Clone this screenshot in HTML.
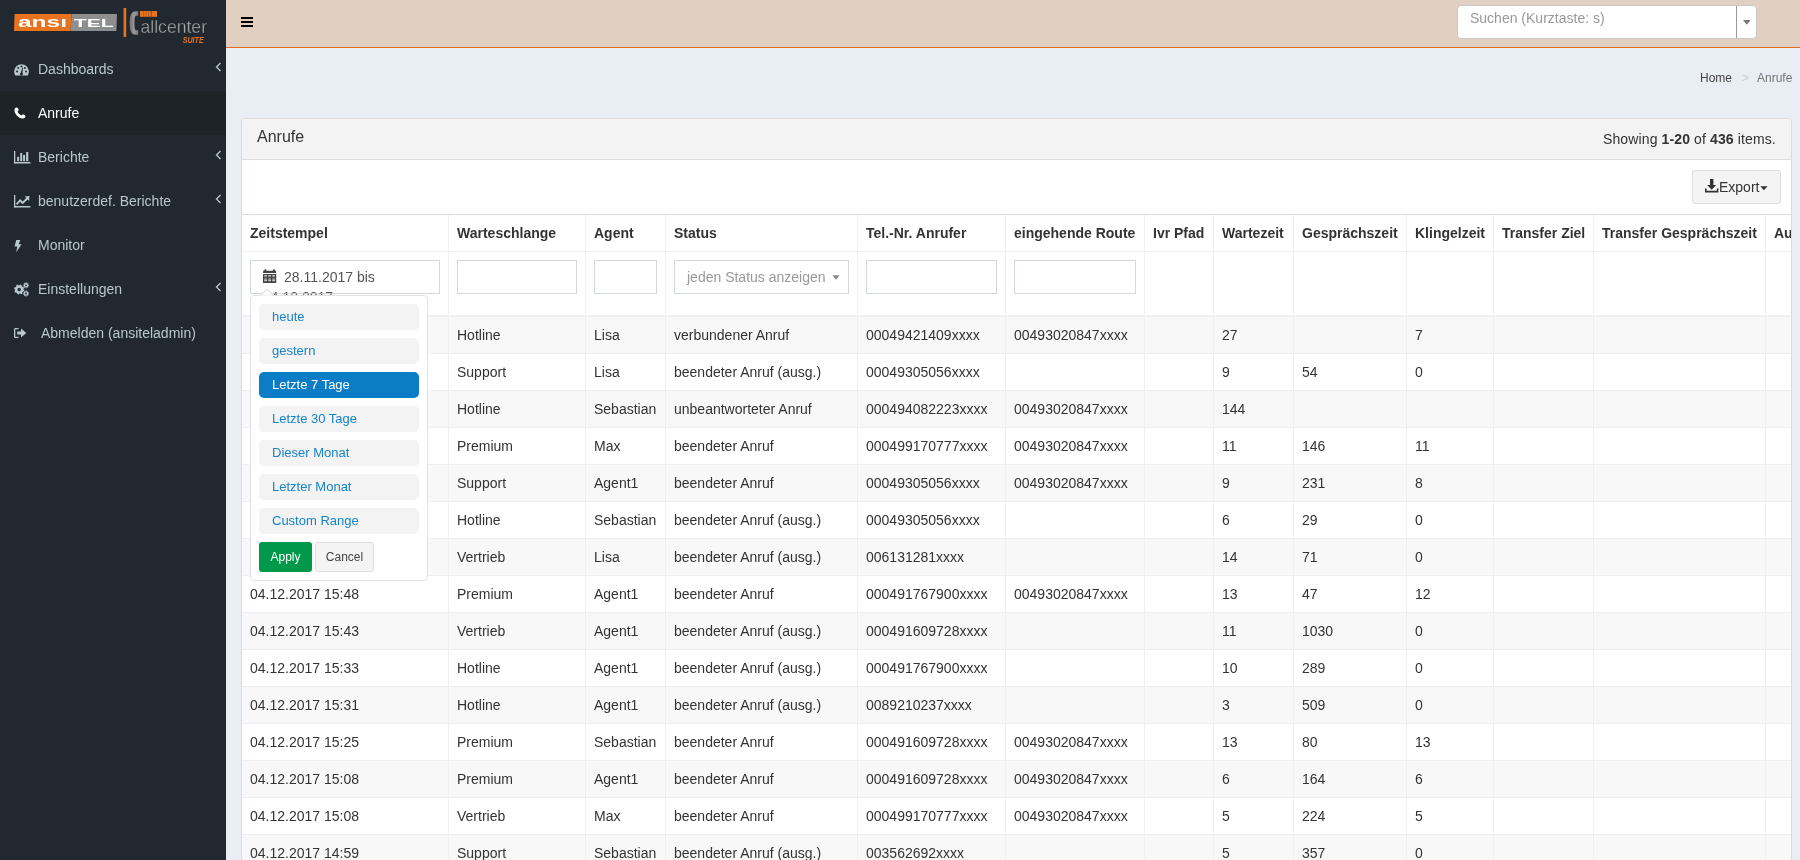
<!DOCTYPE html>
<html><head><meta charset="utf-8"><title>Anrufe</title>
<style>
*{box-sizing:border-box;margin:0;padding:0}
html,body{width:1800px;height:860px;overflow:hidden}
body{position:relative;background:#e9edf4;font-family:"Liberation Sans",sans-serif;font-size:14px;color:#333;line-height:20px}
.abs{position:absolute}
#sidebar{position:absolute;left:0;top:0;width:226px;height:860px;background:#212830}
#header{position:absolute;left:226px;top:0;width:1574px;height:48px;background:#e1cfc2;border-bottom:1px solid #e66a20}
.mi{position:absolute;left:0;width:226px;height:44px;color:#b8c7ce;font-size:14px}
.mi.active{background:#1d2327;color:#fff}
.mi .t{position:absolute;left:38px;top:12px;white-space:nowrap}
.mi .ic{position:absolute;left:13px;top:12px}
.mi .chev{position:absolute;left:215px;top:14.5px}
#box{position:absolute;left:241px;top:118px;width:1551px;height:760px;background:#fff;border:1px solid #dcdcdc;border-radius:3px}
#boxhead{position:absolute;left:0;top:0;width:100%;height:41px;background:#f3f3f3;border-bottom:1px solid #dcdcdc;border-radius:3px 3px 0 0}
.vl{position:absolute;top:215px;height:645px;width:1px;background:#f0f0f0}
.hl{position:absolute;left:242px;width:1549px;height:1px;background:#f0f0f0}
.hl2{position:absolute;left:242px;width:1549px;height:2px;background:#f0f0f0}
.tr{position:absolute;left:242px;width:1549px;height:37px;border-bottom:1px solid #f0f0f0}
.tr.odd{background:#f8f8f8}
.th{position:absolute;font-weight:bold;white-space:nowrap;color:#333}
.td{position:absolute;white-space:nowrap;color:#333}
#tablewrap{position:absolute;left:0;top:0;width:1791px;height:860px;overflow:hidden}
.inp{position:absolute;top:260px;height:34px;border:1px solid #d2d6de;background:#fff}
.ri{position:absolute;left:259px;width:160px;height:26px;background:#f3f3f3;border-radius:5px;color:#1585cc;font-size:13px;line-height:26px;padding-left:13px;white-space:nowrap}
.ri.act{background:#0a7dc6;color:#fff}
#root{position:absolute;left:0;top:0;width:1800px;height:860px;will-change:transform}

</style></head><body><div id="root">
<div id="sidebar">
  <svg class="abs" style="left:0;top:0" width="226" height="48" viewBox="0 0 226 48">
    <polygon points="14.6,14 71.6,14 70.6,31 14,31" fill="#e8731f"/>
    <polygon points="71.6,14 117,14 116.4,31 70.6,31" fill="#8e8e8e"/>
    <text x="18" y="27.2" font-family="Liberation Sans" font-weight="bold" font-size="13.8" fill="#fff" textLength="49" lengthAdjust="spacingAndGlyphs">ansı</text>
    <text x="73.8" y="27.2" font-family="Liberation Sans" font-weight="bold" font-size="10.5" fill="#fff" textLength="40" lengthAdjust="spacingAndGlyphs">TEL</text>
    <rect x="123.6" y="8" width="2.6" height="29" fill="#e8731f"/>
    <defs><linearGradient id="cg" x1="0" y1="0" x2="1" y2="0"><stop offset="0" stop-color="#6e6e6e"/><stop offset="0.5" stop-color="#9a9a9a"/><stop offset="1" stop-color="#7a7a7a"/></linearGradient></defs><path d="M138.2,11.2 L135.8,11.2 C131.2,11.2 129.6,15.5 129.6,23 C129.6,30.5 131.2,34.8 135.8,34.8 L138.2,34.8 L138.2,30.3 L136.2,30.3 C135,30.3 134.5,28 134.5,23 C134.5,18 135,15.7 136.2,15.7 L138.2,15.7 Z" fill="url(#cg)"/>
    <rect x="140" y="11" width="17" height="5.8" fill="#e8731f"/><g fill="#212830" opacity="0.35"><rect x="143.2" y="11" width="0.7" height="5.8"/><rect x="145.6" y="11" width="0.7" height="5.8"/><rect x="148" y="11" width="0.7" height="5.8"/><rect x="150.6" y="11" width="1.4" height="5.8"/></g>
    <text x="140.5" y="33.2" font-family="Liberation Sans" font-size="19" fill="#a8a8a8" stroke="#212830" stroke-width="0.35" textLength="66.5" lengthAdjust="spacingAndGlyphs">allcenter</text>
    <text x="182.7" y="43.2" font-family="Liberation Sans" font-weight="bold" font-style="italic" font-size="8.4" fill="#e8731f" textLength="21" lengthAdjust="spacingAndGlyphs">SUITE</text>
  </svg>

  <div class="mi" style="top:47px">
    <svg class="ic" style="left:13.8px;top:16.8px" width="15" height="12" viewBox="0 0 15 12"><path d="M1.3,11.5 A7.3,7.3 0 1 1 13.7,11.5 Z" fill="#b8c7ce"/><g fill="#222a30"><circle cx="3" cy="7.6" r="1"/><circle cx="4.2" cy="3.9" r="1"/><circle cx="7.5" cy="2.4" r="1"/><circle cx="10.8" cy="3.9" r="1"/><circle cx="12" cy="7.6" r="1"/><path d="M6.6,9.8 L8.3,3.6 L9,3.8 L8.4,9.8 Z"/><circle cx="7.4" cy="9.9" r="1.5"/></g></svg>
    <span class="t">Dashboards</span>
    <svg class="chev" width="7" height="10" viewBox="0 0 7 10"><polyline points="5.5,1 1.5,5 5.5,9" fill="none" stroke="#b8c7ce" stroke-width="1.3"/></svg>
  </div>
  <div class="mi active" style="top:91px">
    <svg class="ic" style="left:13.5px;top:15.5px" width="12" height="12" viewBox="0 0 12 12"><path d="M2.6,0.6 C3.6,0.4 4.2,1.5 4.6,2.6 C4.9,3.5 4.3,4 3.5,4.6 C4.2,6.3 5.6,7.8 7.4,8.6 C8,7.8 8.5,7.3 9.4,7.6 C10.5,8 11.6,8.6 11.4,9.6 C11.2,10.8 10,11.8 8.6,11.6 C4.4,11 0.8,7.4 0.4,3.2 C0.3,1.8 1.4,0.8 2.6,0.6 Z" fill="#fff"/></svg>
    <span class="t">Anrufe</span>
  </div>
  <div class="mi" style="top:135px">
    <svg class="ic" style="left:13.9px;top:15.9px" width="17" height="13" viewBox="0 0 17 13"><g fill="#b8c7ce"><rect x="0" y="0" width="1.3" height="12.5"/><rect x="0" y="11" width="16.4" height="1.5"/><rect x="3.1" y="5.8" width="2" height="4.4"/><rect x="6.2" y="1.9" width="2" height="8.3"/><rect x="9.1" y="3.9" width="2" height="6.3"/><rect x="12.1" y="1" width="2.2" height="9.2"/></g></svg>
    <span class="t">Berichte</span>
    <svg class="chev" width="7" height="10" viewBox="0 0 7 10"><polyline points="5.5,1 1.5,5 5.5,9" fill="none" stroke="#b8c7ce" stroke-width="1.3"/></svg>
  </div>
  <div class="mi" style="top:179px">
    <svg class="ic" style="left:13.9px;top:16px" width="17" height="13" viewBox="0 0 17 13"><g fill="#b8c7ce"><rect x="0" y="0" width="1.3" height="12.5"/><rect x="0" y="11" width="16.4" height="1.5"/><polygon points="15.4,1 15.2,6 13.6,4.4 8.6,9.3 6.1,6.7 3.3,9.9 1.9,8.7 6.1,4.1 8.6,6.6 12.3,3.1 10.6,1.4"/></g></svg>
    <span class="t">benutzerdef. Berichte</span>
    <svg class="chev" width="7" height="10" viewBox="0 0 7 10"><polyline points="5.5,1 1.5,5 5.5,9" fill="none" stroke="#b8c7ce" stroke-width="1.3"/></svg>
  </div>
  <div class="mi" style="top:223px">
    <svg class="ic" style="left:13.5px;top:16.5px" width="8" height="13" viewBox="0 0 8 13"><polygon points="2.3,0 6.3,0 4.6,4.2 7.5,4.2 2.2,12.5 3.3,6.6 0.5,6.6" fill="#b8c7ce"/></svg>
    <span class="t">Monitor</span>
  </div>
  <div class="mi" style="top:267px">
    <svg class="ic" style="left:13.9px;top:14.8px" width="15" height="15" viewBox="0 0 15 15"><g fill="none" stroke="#b8c7ce"><circle cx="5.2" cy="7.5" r="3" stroke-width="2.6"/><circle cx="5.2" cy="7.5" r="4.3" stroke-width="1.6" stroke-dasharray="1.7 1.7"/><circle cx="12" cy="3.3" r="1.6" stroke-width="1.4"/><circle cx="12" cy="3.3" r="2.6" stroke-width="1" stroke-dasharray="1.2 1.1"/><circle cx="12" cy="11.5" r="1.6" stroke-width="1.4"/><circle cx="12" cy="11.5" r="2.6" stroke-width="1" stroke-dasharray="1.2 1.1"/></g></svg>
    <span class="t">Einstellungen</span>
    <svg class="chev" width="7" height="10" viewBox="0 0 7 10"><polyline points="5.5,1 1.5,5 5.5,9" fill="none" stroke="#b8c7ce" stroke-width="1.3"/></svg>
  </div>
  <div class="mi" style="top:311px">
    <svg class="ic" style="left:13.9px;top:16.8px" width="13" height="11" viewBox="0 0 13 11"><g fill="#b8c7ce"><path d="M4.5,0 L1.5,0 C0.6,0 0,0.6 0,1.5 L0,8.5 C0,9.4 0.6,10 1.5,10 L4.5,10 L4.5,8.7 L1.6,8.7 C1.4,8.7 1.3,8.6 1.3,8.4 L1.3,1.6 C1.3,1.4 1.4,1.3 1.6,1.3 L4.5,1.3 Z"/><polygon points="3.2,3.4 7,3.4 7,0.4 12.3,5 7,9.6 7,6.6 3.2,6.6"/></g></svg>
    <span class="t" style="left:41px">Abmelden (ansiteladmin)</span>
  </div>
</div>
<div id="header">
  <div class="abs" style="left:15px;top:16.5px;width:12px;height:2px;background:#000;box-shadow:0 4px 0 #000,0 8px 0 #000"></div>
  <div class="abs" style="left:1231px;top:5px;width:300px;height:34px;background:#fff;border:1px solid #c9c9c9;border-radius:4px"></div>
  <div class="abs" style="left:1510px;top:6px;width:1px;height:32px;background:#999"></div>
  <svg class="abs" style="left:1517px;top:20px" width="8" height="5" viewBox="0 0 8 5"><polygon points="0,0 7.6,0 3.8,4.8" fill="#777"/></svg>
  <div class="abs" style="left:1244px;top:8px;color:#999;font-size:14px">Suchen (Kurztaste: s)</div>
</div>
<div class="abs" style="left:1700px;top:68px;font-size:12px;color:#444">Home</div>
<div class="abs" style="left:1742px;top:68px;font-size:12px;color:#ccc">&gt;</div>
<div class="abs" style="left:1757px;top:68px;font-size:12px;color:#777">Anrufe</div>
<div id="box">
  <div id="boxhead"></div>
</div>
<div class="abs" style="left:257px;top:127px;font-size:16px;line-height:20px;color:#333">Anrufe</div>
<div class="abs" style="left:1603px;top:129px;font-size:14px;color:#333;letter-spacing:0.12px">Showing <b>1-20</b> of <b>436</b> items.</div>
<div class="abs" style="left:1692px;top:170px;width:89px;height:34px;background:#f4f4f4;border:1px solid #ddd;border-radius:3px"></div>
<svg class="abs" style="left:1705px;top:179px" width="14" height="14" viewBox="0 0 14 14"><g fill="#333"><rect x="5" y="0" width="3.4" height="7"/><polygon points="2.2,6 11.2,6 6.7,10.8"/><path d="M0,9.5 L1.6,9.5 L1.6,11.8 L11.8,11.8 L11.8,9.5 L13.4,9.5 L13.4,13.5 L0,13.5 Z"/></g></svg>
<div class="abs" style="left:1719px;top:177px;font-size:14px;color:#333">Export</div>
<svg class="abs" style="left:1760px;top:186px" width="8" height="5" viewBox="0 0 8 5"><polygon points="0.3,0.3 7.6,0.3 3.95,4.2" fill="#333"/></svg>

<div id="tablewrap">
<div class="hl" style="top:214px;background:#dcdcdc"></div>
<div class="hl" style="top:251px"></div>
<div class="hl2" style="top:315px"></div>
<div class="th" style="left:250px;top:223px">Zeitstempel</div>
<div class="th" style="left:457px;top:223px">Warteschlange</div>
<div class="th" style="left:594px;top:223px">Agent</div>
<div class="th" style="left:674px;top:223px">Status</div>
<div class="th" style="left:866px;top:223px">Tel.-Nr. Anrufer</div>
<div class="th" style="left:1014px;top:223px">eingehende Route</div>
<div class="th" style="left:1153px;top:223px">Ivr Pfad</div>
<div class="th" style="left:1222px;top:223px">Wartezeit</div>
<div class="th" style="left:1302px;top:223px">Gesprächszeit</div>
<div class="th" style="left:1415px;top:223px">Klingelzeit</div>
<div class="th" style="left:1502px;top:223px">Transfer Ziel</div>
<div class="th" style="left:1602px;top:223px">Transfer Gesprächszeit</div>
<div class="th" style="left:1774px;top:223px">Au</div>
<div class="tr odd" style="top:317px"></div>
<div class="td" style="left:457px;top:325px">Hotline</div>
<div class="td" style="left:594px;top:325px">Lisa</div>
<div class="td" style="left:674px;top:325px">verbundener Anruf</div>
<div class="td" style="left:866px;top:325px">00049421409xxxx</div>
<div class="td" style="left:1014px;top:325px">00493020847xxxx</div>
<div class="td" style="left:1222px;top:325px">27</div>
<div class="td" style="left:1415px;top:325px">7</div>
<div class="tr" style="top:354px"></div>
<div class="td" style="left:457px;top:362px">Support</div>
<div class="td" style="left:594px;top:362px">Lisa</div>
<div class="td" style="left:674px;top:362px">beendeter Anruf (ausg.)</div>
<div class="td" style="left:866px;top:362px">00049305056xxxx</div>
<div class="td" style="left:1222px;top:362px">9</div>
<div class="td" style="left:1302px;top:362px">54</div>
<div class="td" style="left:1415px;top:362px">0</div>
<div class="tr odd" style="top:391px"></div>
<div class="td" style="left:457px;top:399px">Hotline</div>
<div class="td" style="left:594px;top:399px">Sebastian</div>
<div class="td" style="left:674px;top:399px">unbeantworteter Anruf</div>
<div class="td" style="left:866px;top:399px">000494082223xxxx</div>
<div class="td" style="left:1014px;top:399px">00493020847xxxx</div>
<div class="td" style="left:1222px;top:399px">144</div>
<div class="tr" style="top:428px"></div>
<div class="td" style="left:457px;top:436px">Premium</div>
<div class="td" style="left:594px;top:436px">Max</div>
<div class="td" style="left:674px;top:436px">beendeter Anruf</div>
<div class="td" style="left:866px;top:436px">000499170777xxxx</div>
<div class="td" style="left:1014px;top:436px">00493020847xxxx</div>
<div class="td" style="left:1222px;top:436px">11</div>
<div class="td" style="left:1302px;top:436px">146</div>
<div class="td" style="left:1415px;top:436px">11</div>
<div class="tr odd" style="top:465px"></div>
<div class="td" style="left:457px;top:473px">Support</div>
<div class="td" style="left:594px;top:473px">Agent1</div>
<div class="td" style="left:674px;top:473px">beendeter Anruf</div>
<div class="td" style="left:866px;top:473px">00049305056xxxx</div>
<div class="td" style="left:1014px;top:473px">00493020847xxxx</div>
<div class="td" style="left:1222px;top:473px">9</div>
<div class="td" style="left:1302px;top:473px">231</div>
<div class="td" style="left:1415px;top:473px">8</div>
<div class="tr" style="top:502px"></div>
<div class="td" style="left:457px;top:510px">Hotline</div>
<div class="td" style="left:594px;top:510px">Sebastian</div>
<div class="td" style="left:674px;top:510px">beendeter Anruf (ausg.)</div>
<div class="td" style="left:866px;top:510px">00049305056xxxx</div>
<div class="td" style="left:1222px;top:510px">6</div>
<div class="td" style="left:1302px;top:510px">29</div>
<div class="td" style="left:1415px;top:510px">0</div>
<div class="tr odd" style="top:539px"></div>
<div class="td" style="left:457px;top:547px">Vertrieb</div>
<div class="td" style="left:594px;top:547px">Lisa</div>
<div class="td" style="left:674px;top:547px">beendeter Anruf (ausg.)</div>
<div class="td" style="left:866px;top:547px">006131281xxxx</div>
<div class="td" style="left:1222px;top:547px">14</div>
<div class="td" style="left:1302px;top:547px">71</div>
<div class="td" style="left:1415px;top:547px">0</div>
<div class="tr" style="top:576px"></div>
<div class="td" style="left:250px;top:584px">04.12.2017 15:48</div>
<div class="td" style="left:457px;top:584px">Premium</div>
<div class="td" style="left:594px;top:584px">Agent1</div>
<div class="td" style="left:674px;top:584px">beendeter Anruf</div>
<div class="td" style="left:866px;top:584px">000491767900xxxx</div>
<div class="td" style="left:1014px;top:584px">00493020847xxxx</div>
<div class="td" style="left:1222px;top:584px">13</div>
<div class="td" style="left:1302px;top:584px">47</div>
<div class="td" style="left:1415px;top:584px">12</div>
<div class="tr odd" style="top:613px"></div>
<div class="td" style="left:250px;top:621px">04.12.2017 15:43</div>
<div class="td" style="left:457px;top:621px">Vertrieb</div>
<div class="td" style="left:594px;top:621px">Agent1</div>
<div class="td" style="left:674px;top:621px">beendeter Anruf (ausg.)</div>
<div class="td" style="left:866px;top:621px">000491609728xxxx</div>
<div class="td" style="left:1222px;top:621px">11</div>
<div class="td" style="left:1302px;top:621px">1030</div>
<div class="td" style="left:1415px;top:621px">0</div>
<div class="tr" style="top:650px"></div>
<div class="td" style="left:250px;top:658px">04.12.2017 15:33</div>
<div class="td" style="left:457px;top:658px">Hotline</div>
<div class="td" style="left:594px;top:658px">Agent1</div>
<div class="td" style="left:674px;top:658px">beendeter Anruf (ausg.)</div>
<div class="td" style="left:866px;top:658px">000491767900xxxx</div>
<div class="td" style="left:1222px;top:658px">10</div>
<div class="td" style="left:1302px;top:658px">289</div>
<div class="td" style="left:1415px;top:658px">0</div>
<div class="tr odd" style="top:687px"></div>
<div class="td" style="left:250px;top:695px">04.12.2017 15:31</div>
<div class="td" style="left:457px;top:695px">Hotline</div>
<div class="td" style="left:594px;top:695px">Agent1</div>
<div class="td" style="left:674px;top:695px">beendeter Anruf (ausg.)</div>
<div class="td" style="left:866px;top:695px">0089210237xxxx</div>
<div class="td" style="left:1222px;top:695px">3</div>
<div class="td" style="left:1302px;top:695px">509</div>
<div class="td" style="left:1415px;top:695px">0</div>
<div class="tr" style="top:724px"></div>
<div class="td" style="left:250px;top:732px">04.12.2017 15:25</div>
<div class="td" style="left:457px;top:732px">Premium</div>
<div class="td" style="left:594px;top:732px">Sebastian</div>
<div class="td" style="left:674px;top:732px">beendeter Anruf</div>
<div class="td" style="left:866px;top:732px">000491609728xxxx</div>
<div class="td" style="left:1014px;top:732px">00493020847xxxx</div>
<div class="td" style="left:1222px;top:732px">13</div>
<div class="td" style="left:1302px;top:732px">80</div>
<div class="td" style="left:1415px;top:732px">13</div>
<div class="tr odd" style="top:761px"></div>
<div class="td" style="left:250px;top:769px">04.12.2017 15:08</div>
<div class="td" style="left:457px;top:769px">Premium</div>
<div class="td" style="left:594px;top:769px">Agent1</div>
<div class="td" style="left:674px;top:769px">beendeter Anruf</div>
<div class="td" style="left:866px;top:769px">000491609728xxxx</div>
<div class="td" style="left:1014px;top:769px">00493020847xxxx</div>
<div class="td" style="left:1222px;top:769px">6</div>
<div class="td" style="left:1302px;top:769px">164</div>
<div class="td" style="left:1415px;top:769px">6</div>
<div class="tr" style="top:798px"></div>
<div class="td" style="left:250px;top:806px">04.12.2017 15:08</div>
<div class="td" style="left:457px;top:806px">Vertrieb</div>
<div class="td" style="left:594px;top:806px">Max</div>
<div class="td" style="left:674px;top:806px">beendeter Anruf</div>
<div class="td" style="left:866px;top:806px">000499170777xxxx</div>
<div class="td" style="left:1014px;top:806px">00493020847xxxx</div>
<div class="td" style="left:1222px;top:806px">5</div>
<div class="td" style="left:1302px;top:806px">224</div>
<div class="td" style="left:1415px;top:806px">5</div>
<div class="tr odd" style="top:835px"></div>
<div class="td" style="left:250px;top:843px">04.12.2017 14:59</div>
<div class="td" style="left:457px;top:843px">Support</div>
<div class="td" style="left:594px;top:843px">Sebastian</div>
<div class="td" style="left:674px;top:843px">beendeter Anruf (ausg.)</div>
<div class="td" style="left:866px;top:843px">003562692xxxx</div>
<div class="td" style="left:1222px;top:843px">5</div>
<div class="td" style="left:1302px;top:843px">357</div>
<div class="td" style="left:1415px;top:843px">0</div>
<div class="vl" style="left:448px"></div>
<div class="vl" style="left:585px"></div>
<div class="vl" style="left:665px"></div>
<div class="vl" style="left:857px"></div>
<div class="vl" style="left:1005px"></div>
<div class="vl" style="left:1144px"></div>
<div class="vl" style="left:1213px"></div>
<div class="vl" style="left:1293px"></div>
<div class="vl" style="left:1406px"></div>
<div class="vl" style="left:1493px"></div>
<div class="vl" style="left:1593px"></div>
<div class="vl" style="left:1765px"></div>
</div>
<div class="inp" style="left:250px;width:190px;overflow:hidden">
  <svg class="abs" style="left:12px;top:8px" width="14" height="14" viewBox="0 0 14 14"><g fill="#444"><rect x="0" y="1.8" width="13.2" height="2.3" rx="0.6"/><circle cx="2.3" cy="1.4" r="1.1"/><circle cx="10.9" cy="1.4" r="1.1"/><rect x="0" y="5" width="13.2" height="9" rx="0.6"/></g><g fill="#fff" opacity="0.85"><rect x="1.3" y="6.2" width="2.6" height="1.9"/><rect x="5.3" y="6.2" width="2.6" height="1.9"/><rect x="9.3" y="6.2" width="2.6" height="1.9"/><rect x="1.3" y="9.6" width="2.6" height="2.6"/><rect x="5.3" y="9.6" width="2.6" height="2.6"/><rect x="9.3" y="9.6" width="2.6" height="2.6"/></g><g fill="#444"><rect x="0" y="7" width="13.2" height="0.5"/><rect x="0" y="10.6" width="13.2" height="0.5"/></g></svg>
</div>
<div class="abs" style="left:284px;top:267px;color:#555;width:160px">28.11.2017 bis</div>
<div class="abs" style="left:263px;top:287px;color:#555;width:160px">04.12.2017</div>
<div class="abs" style="left:250px;top:293px;width:190px;height:1px;background:#d2d6de;opacity:.6"></div>
<div class="inp" style="left:457px;width:120px"></div>
<div class="inp" style="left:594px;width:63px"></div>
<div class="inp" style="left:674px;width:175px"></div>
<div class="abs" style="left:687px;top:267px;color:#999">jeden Status anzeigen</div>
<svg class="abs" style="left:832px;top:275px" width="8" height="5" viewBox="0 0 8 5"><polygon points="0.5,0.3 7.5,0.3 4,4.8" fill="#888"/></svg>
<div class="inp" style="left:866px;width:131px"></div>
<div class="inp" style="left:1014px;width:122px"></div>
<div id="dd" class="abs" style="left:250px;top:295px;width:178px;height:286px;background:#fff;border:1px solid #e3e3e3;border-radius:4px">
</div>
<svg class="abs" style="left:259px;top:288px" width="16" height="9" viewBox="0 0 16 9"><polygon points="1,8 8,1 15,8" fill="#fff" stroke="#d6d6d6" stroke-width="1"/><rect x="0" y="7.6" width="16" height="1.4" fill="#fff"/></svg>
<div class="ri" style="top:304px">heute</div>
<div class="ri" style="top:338px">gestern</div>
<div class="ri act" style="top:372px">Letzte 7 Tage</div>
<div class="ri" style="top:406px">Letzte 30 Tage</div>
<div class="ri" style="top:440px">Dieser Monat</div>
<div class="ri" style="top:474px">Letzter Monat</div>
<div class="ri" style="top:508px">Custom Range</div>
<div class="abs" style="left:259px;top:542px;width:53px;height:30px;background:#00994c;border-radius:3px;color:#fff;font-size:12px;line-height:30px;text-align:center">Apply</div>
<div class="abs" style="left:315px;top:542px;width:59px;height:30px;background:#f4f4f4;border:1px solid #ddd;border-radius:3px;color:#444;font-size:12px;line-height:28px;text-align:center">Cancel</div>

</div></body></html>
